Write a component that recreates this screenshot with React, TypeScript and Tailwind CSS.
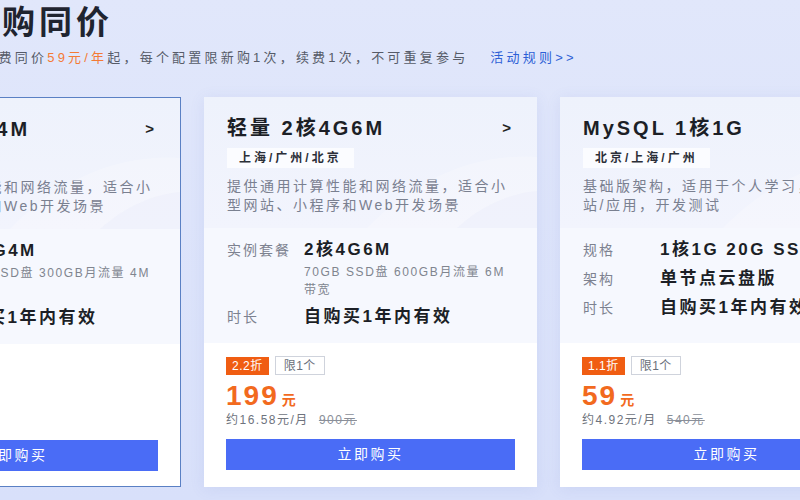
import React from 'react';

type Plan = {
  name: string;
  regions: string;
  desc: string;
  specs: { label: string; value: string; sub?: string }[];
  discount: string;
  price: string;
  monthly: string;
  original: string;
  selected?: boolean;
  arrow?: boolean;
};

const plans: Plan[] = [
  {
    name: '轻量 2核2G4M',
    regions: '上海/广州/北京',
    desc: '提供通用计算性能和网络流量，适合小型网站、小程序和Web开发场景',
    specs: [
      { label: '实例套餐', value: '2核2G4M', sub: '40GB SSD盘 300GB月流量 4M 带宽' },
      { label: '时长', value: '自购买1年内有效' },
    ],
    discount: '1.3折',
    price: '99',
    monthly: '约8.25元/月',
    original: '744元',
    selected: true,
    arrow: true,
  },
  {
    name: '轻量 2核4G6M',
    regions: '上海/广州/北京',
    desc: '提供通用计算性能和网络流量，适合小型网站、小程序和Web开发场景',
    specs: [
      { label: '实例套餐', value: '2核4G6M', sub: '70GB SSD盘 600GB月流量 6M 带宽' },
      { label: '时长', value: '自购买1年内有效' },
    ],
    discount: '2.2折',
    price: '199',
    monthly: '约16.58元/月',
    original: '900元',
    arrow: true,
  },
  {
    name: 'MySQL 1核1G',
    regions: '北京/上海/广州',
    desc: '基础版架构，适用于个人学习，小型网站/应用，开发测试',
    specs: [
      { label: '规格', value: '1核1G 20G SSD云盘' },
      { label: '架构', value: '单节点云盘版' },
      { label: '时长', value: '自购买1年内有效' },
    ],
    discount: '1.1折',
    price: '59',
    monthly: '约4.92元/月',
    original: '540元',
  },
];

// faint light band in the top-right of each card header
const Swoosh = () => (
  <svg className="absolute right-0 top-[30px] pointer-events-none" width="200" height="101" viewBox="0 0 200 101" fill="none">
    <path d="M30 101 C 80 50, 140 26, 200 30 L 200 101 Z" fill="#ffffff" opacity="0.22" />
    <path d="M120 101 C 145 78, 175 66, 200 64 L 200 101 Z" fill="#e8ecf9" opacity="0.35" />
  </svg>
);

const PlanCard = ({ plan }: { plan: Plan }) => (
  <div
    className={`w-[333px] h-[390px] shrink-0 flex flex-col overflow-hidden bg-white ${
      plan.selected ? 'border border-[#5a80c4]' : 'shadow-[0_2px_14px_rgba(90,110,190,0.10)]'
    }`}
  >
    {/* header */}
    <div className="relative h-[131px] px-[23px] pt-[17px] bg-gradient-to-b from-[#eef2fc] to-[#f2f4fd]">
      <Swoosh />
      <div className="relative flex items-center justify-between">
        <h3 className="text-[20px] leading-[28px] font-bold tracking-[3px] text-[#1c1f26]">{plan.name}</h3>
        {plan.arrow && <span className="mr-[3px] text-[15px] font-bold text-[#222]">&gt;</span>}
      </div>
      <div className="relative mt-[6px] inline-flex h-[20px] items-center px-[12px] bg-[#fbfcff] text-[12px] font-bold tracking-[3px] text-[#2b2f38]">
        {plan.regions}
      </div>
      <p className="relative mt-[8px] text-[14px] leading-[19px] tracking-[2.5px] text-[#7a8090]">{plan.desc}</p>
    </div>

    {/* specs */}
    <div className="h-[115px] px-[23px] pt-[11px] bg-[#f6f8fe] flex flex-col gap-[7px]">
      {plan.specs.map(s => (
        <div key={s.label} className="flex">
          <span className="w-[77px] shrink-0 text-[14px] leading-[22px] tracking-[2px] text-[#7d8290]">{s.label}</span>
          <div className="min-w-0 flex-1">
            <div className="text-[17px] leading-[22px] font-bold tracking-[2.5px] text-[#1c1f26] whitespace-nowrap">{s.value}</div>
            {s.sub && (
              <div className="mt-[2px] text-[12px] leading-[18px] tracking-[1.6px] text-[#80858f]">{s.sub}</div>
            )}
          </div>
        </div>
      ))}
    </div>

    {/* price */}
    <div className="flex-1 px-[22px] pt-[13px] bg-white">
      <div className="flex items-center gap-[6px]">
        <span className="h-[18px] px-[6px] flex items-center bg-[#f05d12] text-[12px] tracking-[0.5px] text-white">{plan.discount}</span>
        <span className="h-[19px] px-[8px] flex items-center border border-[#cfd3dc] text-[12px] tracking-[0.5px] text-[#6a6f7a]">限1个</span>
      </div>
      <div className="mt-[4px] flex items-baseline h-[33px]">
        <span className="text-[28px] leading-[33px] font-bold tracking-[2px] text-[#f26a1e]">{plan.price}</span>
        <span className="ml-[3px] text-[14px] font-bold text-[#f26a1e]">元</span>
      </div>
      <div className="flex items-center gap-[10px] text-[12px] leading-[16px] tracking-[1.5px] text-[#6e737d]">
        <span>{plan.monthly}</span>
        <span className="line-through text-[#8a8f99]">{plan.original}</span>
      </div>
      <button className="mt-[11px] w-full h-[31px] bg-[#4a6cf6] text-white text-[14px] tracking-[2.5px]">立即购买</button>
    </div>
  </div>
);

export default function App() {
  return (
    <div
      className="w-[800px] h-[500px] overflow-hidden bg-gradient-to-b from-[#e1e7fb] to-[#d8e0fa]"
      style={{ fontFamily: '"Liberation Sans", "Noto Sans CJK SC", sans-serif' }}
    >
      <div className="-ml-[152px] w-[1200px]">
        <div className="pl-[102px] pt-[3px]">
          <h1 className="ml-[15px] text-[33px] leading-[40px] font-bold tracking-[4px] text-[#1f2430]">新购同价</h1>
          <p className="mt-[5px] text-[13px] leading-[20px] tracking-[3.2px] text-[#565b68]">
            新购续费同价<span className="text-[#f47a35]">59元/年</span>起，每个配置限新购1次，续费1次，不可重复参与
            <span className="ml-[22px] text-[#2d5fd6]">活动规则&gt;&gt;</span>
          </p>
        </div>
        <div className="mt-[29px] flex gap-[23px]">
          {plans.map(p => (
            <PlanCard key={p.name} plan={p} />
          ))}
        </div>
      </div>
    </div>
  );
}
